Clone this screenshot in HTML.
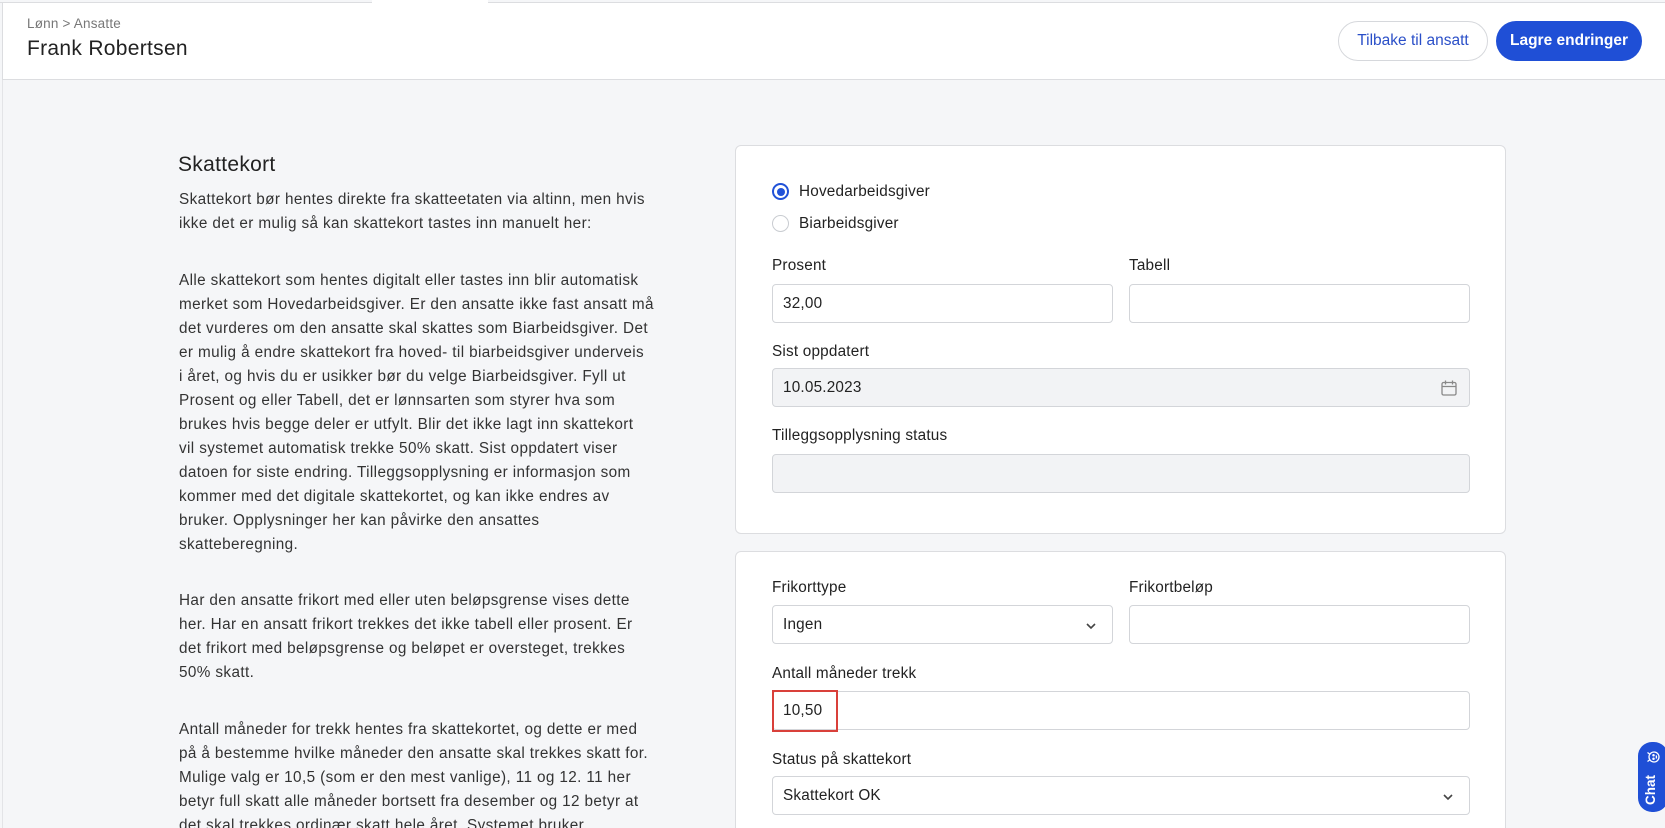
<!DOCTYPE html>
<html style="overflow:hidden;height:828px"><head><meta charset="utf-8"><style>
*{box-sizing:border-box;margin:0;padding:0}
body{width:1665px;height:828px;overflow:hidden;background:#f5f6f8;font-family:"Liberation Sans",Arial,sans-serif;color:#2b2b2b;position:relative}
.abs{position:absolute}
.top{left:0;top:0;width:1665px;height:3px;border-bottom:1px solid #dcdde0;background:#f5f6f8}
.tabgap{left:372px;top:0;width:116px;height:4px;background:#fff}
.header{left:2px;top:3px;width:1663px;height:77px;background:#fff;border-bottom:1px solid #dcdde0;border-left:1px solid #dcdde0}
.lline{left:2px;top:80px;width:1px;height:748px;background:#e3e4e7}
.crumb{left:27px;top:16px;font-size:13.5px;color:#777;letter-spacing:0.2px}
.title{left:27px;top:37px;font-size:21px;color:#222;letter-spacing:0.3px}
.btn{top:21px;height:40px;border-radius:20px;font-size:15.5px;display:flex;align-items:center;justify-content:center}
.b1{left:1338px;width:150px;border:1px solid #d6d8dc;color:#2a4fc8;background:#fff}
.b2{left:1496px;width:146px;background:#1f4fd6;color:#fff;font-weight:bold}
h2{position:absolute;left:178px;top:153px;font-size:21px;font-weight:normal;color:#222;letter-spacing:0.3px}
.txt{left:179px;font-size:15.3px;line-height:24px;color:#333;white-space:nowrap;letter-spacing:0.38px}
.card{background:#fff;border:1px solid #dcdde0;border-radius:6px;left:735px;width:771px}
.lbl{font-size:15.3px;color:#222;letter-spacing:0.2px}
.inp{border:1px solid #d3d5d9;border-radius:4px;background:#fff;height:39px;font-size:15.3px;color:#222;padding-left:10px;display:flex;align-items:center;letter-spacing:0.2px}
.dis{background:#f2f3f5}
.radio{width:17px;height:17px;border-radius:50%}
.chev{position:absolute;right:14px;top:13px}
</style></head><body>
<div class="abs top"></div>
<div class="abs header"></div>
<div class="abs tabgap"></div>
<div class="abs lline"></div>
<div class="abs crumb">Lønn &gt; Ansatte</div>
<div class="abs title">Frank Robertsen</div>
<div class="abs btn b1">Tilbake til ansatt</div>
<div class="abs btn b2">Lagre endringer</div>

<h2>Skattekort</h2>
<div class="abs txt" style="top:188px">Skattekort bør hentes direkte fra skatteetaten via altinn, men hvis<br>ikke det er mulig så kan skattekort tastes inn manuelt her:</div>
<div class="abs txt" style="top:269px">Alle skattekort som hentes digitalt eller tastes inn blir automatisk<br>merket som Hovedarbeidsgiver. Er den ansatte ikke fast ansatt må<br>det vurderes om den ansatte skal skattes som Biarbeidsgiver. Det<br>er mulig å endre skattekort fra hoved- til biarbeidsgiver underveis<br>i året, og hvis du er usikker bør du velge Biarbeidsgiver. Fyll ut<br>Prosent og eller Tabell, det er lønnsarten som styrer hva som<br>brukes hvis begge deler er utfylt. Blir det ikke lagt inn skattekort<br>vil systemet automatisk trekke 50% skatt. Sist oppdatert viser<br>datoen for siste endring. Tilleggsopplysning er informasjon som<br>kommer med det digitale skattekortet, og kan ikke endres av<br>bruker. Opplysninger her kan påvirke den ansattes<br>skatteberegning.</div>
<div class="abs txt" style="top:589px">Har den ansatte frikort med eller uten beløpsgrense vises dette<br>her. Har en ansatt frikort trekkes det ikke tabell eller prosent. Er<br>det frikort med beløpsgrense og beløpet er oversteget, trekkes<br>50% skatt.</div>
<div class="abs txt" style="top:718px">Antall måneder for trekk hentes fra skattekortet, og dette er med<br>på å bestemme hvilke måneder den ansatte skal trekkes skatt for.<br>Mulige valg er 10,5 (som er den mest vanlige), 11 og 12. 11 her<br>betyr full skatt alle måneder bortsett fra desember og 12 betyr at<br>det skal trekkes ordinær skatt hele året. Systemet bruker</div>

<div class="abs card" style="top:145px;height:389px"></div>
<div class="abs radio" style="left:772px;top:183px;border:2px solid #2152d8;background:#fff"></div>
<div class="abs" style="left:776.5px;top:187.5px;width:8px;height:8px;border-radius:50%;background:#2152d8"></div>
<div class="abs radio" style="left:772px;top:215px;border:1.5px solid #c9ccd1"></div>
<div class="abs lbl" style="left:799px;top:183px">Hovedarbeidsgiver</div>
<div class="abs lbl" style="left:799px;top:215px">Biarbeidsgiver</div>
<div class="abs lbl" style="left:772px;top:257px">Prosent</div>
<div class="abs lbl" style="left:1129px;top:257px">Tabell</div>
<div class="abs inp" style="left:772px;top:284px;width:341px">32,00</div>
<div class="abs inp" style="left:1129px;top:284px;width:341px"></div>
<div class="abs lbl" style="left:772px;top:343px">Sist oppdatert</div>
<div class="abs inp dis" style="left:772px;top:368px;width:698px">10.05.2023
<svg class="abs" style="left:667px;top:10px" width="18" height="18" viewBox="0 0 18 18" fill="none" stroke="#888" stroke-width="1.3"><rect x="2" y="3.5" width="14" height="12.5" rx="1.5"/><path d="M2 7.5h14M5.5 1.5v4M12.5 1.5v4"/></svg></div>
<div class="abs lbl" style="left:772px;top:427px">Tilleggsopplysning status</div>
<div class="abs inp dis" style="left:772px;top:454px;width:698px"></div>

<div class="abs card" style="top:551px;height:400px"></div>
<div class="abs lbl" style="left:772px;top:579px">Frikorttype</div>
<div class="abs lbl" style="left:1129px;top:579px">Frikortbeløp</div>
<div class="abs inp" style="left:772px;top:605px;width:341px">Ingen<svg class="chev" width="14" height="14" viewBox="0 0 14 14" fill="none" stroke="#444" stroke-width="1.6"><path d="M3 5l4 4 4-4"/></svg></div>
<div class="abs inp" style="left:1129px;top:605px;width:341px"></div>
<div class="abs lbl" style="left:772px;top:665px">Antall måneder trekk</div>
<div class="abs inp" style="left:772px;top:691px;width:698px">10,50</div>
<div class="abs" style="left:772px;top:690px;width:66px;height:42px;border:2px solid #d9403a"></div>
<div class="abs lbl" style="left:772px;top:751px">Status på skattekort</div>
<div class="abs inp" style="left:772px;top:776px;width:698px">Skattekort OK<svg class="chev" width="14" height="14" viewBox="0 0 14 14" fill="none" stroke="#444" stroke-width="1.6"><path d="M3 5l4 4 4-4"/></svg></div>

<div class="abs" style="left:1638px;top:742px;width:30px;height:70px;border-radius:14px;background:#1f4fd6"></div>
<div class="abs" style="left:1629px;top:781px;width:44px;height:18px;transform:rotate(-90deg);color:#fff;font-size:13.5px;font-weight:bold;text-align:center;line-height:18px">Chat</div>
<svg class="abs" style="left:1645px;top:749px" width="16" height="16" viewBox="0 0 16 16" fill="none" stroke="#fff" stroke-width="1.3"><g transform="rotate(-90 8 8)"><circle cx="8" cy="9" r="5"/><circle cx="6.2" cy="8.5" r="0.6" fill="#fff"/><circle cx="9.8" cy="8.5" r="0.6" fill="#fff"/><path d="M6.5 11q1.5 1 3 0M5 4.5l-1.5-2M11 4.5l1.5-2"/></g></svg>
</body></html>
